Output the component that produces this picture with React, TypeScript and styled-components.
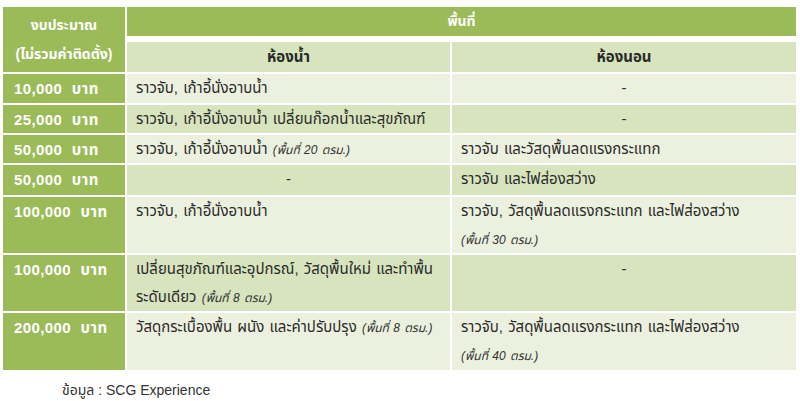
import React from "react";
import styled, { createGlobalStyle } from "styled-components";

const Global = createGlobalStyle`
  html, body { margin: 0; padding: 0; background: #ffffff; }
  body { font-family: "Liberation Sans", "Noto Sans Thai", "Noto Sans Thai UI", Tahoma, "Noto Sans", sans-serif; }
`;

const Page = styled.div`
  width: 800px;
  height: 401px;
  box-sizing: border-box;
  padding: 7px 4px 0 3px;
  overflow: hidden;
`;

const Grid = styled.div`
  display: grid;
  grid-template-columns: 122px 323px 344px;
  grid-template-rows: 29px 34px 29px 28px 28px 30px 56px 56px 57px;
  column-gap: 2px;
  row-gap: 2px;
`;

const HeadDark = styled.div<{ $span?: number; $rows?: number }>`
  grid-column: span ${(p) => p.$span ?? 1};
  grid-row: span ${(p) => p.$rows ?? 1};
  background: #9bbb59;
  color: #ffffff;
  font-weight: bold;
  font-size: 14px;
  display: flex;
  flex-direction: column;
  align-items: center;
  justify-content: center;
  text-align: center;
  line-height: 29px;
`;

const SubHead = styled.div`
  margin-top: 4px;
  background: #d7e4bd;
  color: #2a2a2a;
  font-weight: bold;
  font-size: 15px;
  display: flex;
  align-items: center;
  justify-content: center;
`;

const Price = styled.div`
  background: #9bbb59;
  color: #ffffff;
  font-weight: bold;
  font-size: 15px;
  line-height: 29px;
  letter-spacing: 0.4px;
  word-spacing: 5px;
  padding: 0 9px 0 11px;
`;

const Cell = styled.div<{ $band: boolean; $center?: boolean }>`
  background: ${(p) => (p.$band ? "#d7e4bd" : "#ebf1de")};
  color: #2b2b2b;
  font-size: 15px;
  line-height: 28px;
  word-spacing: 1px;
  padding: 0 9px;
  text-align: ${(p) => (p.$center ? "center" : "left")};
`;

const Note = styled.i`
  font-size: 12px;
  color: #333333;
`;

const Footer = styled.div`
  margin: 10px 0 0 59px;
  font-size: 14px;
  line-height: 20px;
  color: #333333;
`;

type Row = { price: string; bath: React.ReactNode; bed: React.ReactNode };

const rows: Row[] = [
  { price: "10,000 บาท", bath: "ราวจับ, เก้าอี้นั่งอาบน้ำ", bed: "-" },
  { price: "25,000 บาท", bath: "ราวจับ, เก้าอี้นั่งอาบน้ำ เปลี่ยนก๊อกน้ำและสุขภัณฑ์", bed: "-" },
  {
    price: "50,000 บาท",
    bath: (
      <>
        ราวจับ, เก้าอี้นั่งอาบน้ำ <Note>(พื้นที่ 20 ตรม.)</Note>
      </>
    ),
    bed: "ราวจับ และวัสดุพื้นลดแรงกระแทก",
  },
  { price: "50,000 บาท", bath: "-", bed: "ราวจับ และไฟส่องสว่าง" },
  {
    price: "100,000 บาท",
    bath: "ราวจับ, เก้าอี้นั่งอาบน้ำ",
    bed: (
      <>
        ราวจับ, วัสดุพื้นลดแรงกระแทก และไฟส่องสว่าง
        <br />
        <Note>(พื้นที่ 30 ตรม.)</Note>
      </>
    ),
  },
  {
    price: "100,000 บาท",
    bath: (
      <>
        เปลี่ยนสุขภัณฑ์และอุปกรณ์, วัสดุพื้นใหม่ และทำพื้น
        <br />
        ระดับเดียว <Note>(พื้นที่ 8 ตรม.)</Note>
      </>
    ),
    bed: "-",
  },
  {
    price: "200,000 บาท",
    bath: (
      <>
        วัสดุกระเบื้องพื้น ผนัง และค่าปรับปรุง <Note>(พื้นที่ 8 ตรม.)</Note>
      </>
    ),
    bed: (
      <>
        ราวจับ, วัสดุพื้นลดแรงกระแทก และไฟส่องสว่าง
        <br />
        <Note>(พื้นที่ 40 ตรม.)</Note>
      </>
    ),
  },
];

export default function App() {
  return (
    <Page>
      <Global />
      <Grid>
        <HeadDark $rows={2}>
          <span>งบประมาณ</span>
          <span>(ไม่รวมค่าติดตั้ง)</span>
        </HeadDark>
        <HeadDark $span={2}>พื้นที่</HeadDark>
        <SubHead>ห้องน้ำ</SubHead>
        <SubHead>ห้องนอน</SubHead>
        {rows.map((r, i) => (
          <React.Fragment key={i}>
            <Price>{r.price}</Price>
            <Cell $band={i % 2 === 1} $center={r.bath === "-"}>
              {r.bath}
            </Cell>
            <Cell $band={i % 2 === 1} $center={r.bed === "-"}>
              {r.bed}
            </Cell>
          </React.Fragment>
        ))}
      </Grid>
      <Footer>ข้อมูล : SCG Experience</Footer>
    </Page>
  );
}
